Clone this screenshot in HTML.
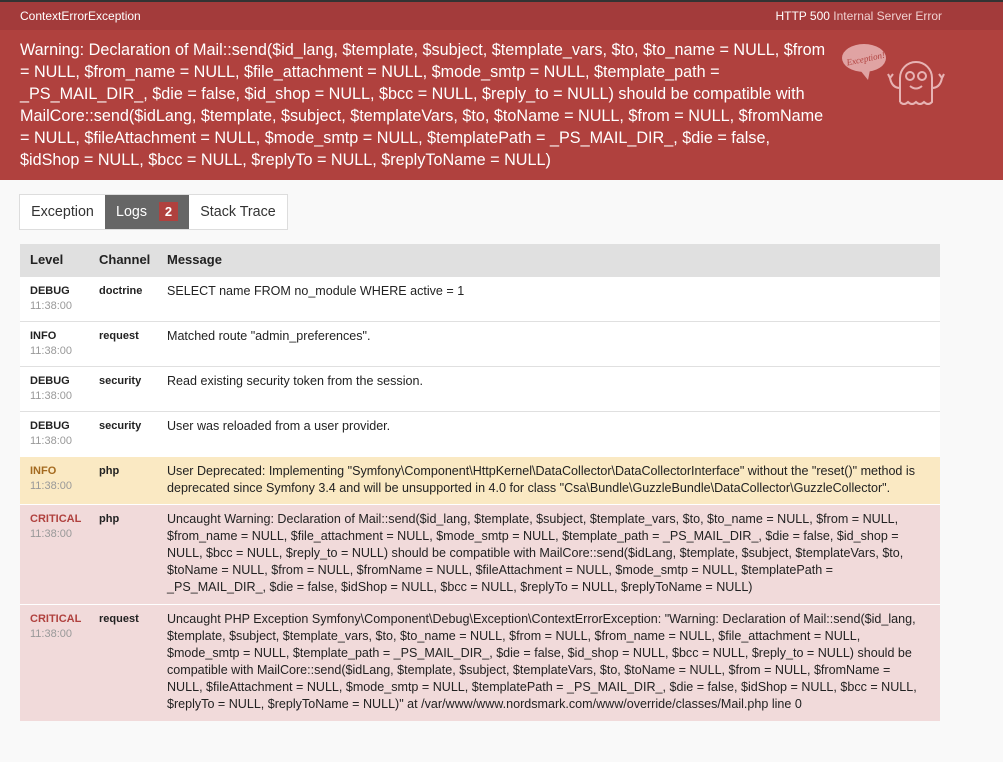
<!DOCTYPE html>
<html><head><meta charset="utf-8"><style>
*{margin:0;padding:0;box-sizing:border-box}
body{width:1003px;height:762px;background:#f9f9f9;font-family:"Liberation Sans",Arial,sans-serif;color:#222;overflow:hidden}
.top{height:30px;background:#a33b3b;border-top:2px solid #333;color:#fff;font-size:12px;display:flex;justify-content:space-between;align-items:center;padding:0 61px 0 20px}
.top span.r b{font-weight:normal;color:#f0d0d0}
.hdr{height:150px;background:#b0413e;color:#fff;font-size:16.2px;line-height:22px;padding:9px 20px 0 20px;position:relative;white-space:nowrap}
.ghost{position:absolute;left:838px;top:8px}
.tabs{position:absolute;left:19px;top:194px;display:flex;border:1px solid #ddd;background:#fff;height:36px}
.tabs div{line-height:34px;font-size:14.3px;color:#333;text-align:center}
.tabs .act{background:#666;color:#fff}
.badge{display:inline-block;background:#b0413e;color:#fff;font-weight:bold;font-size:13px;width:19px;line-height:19px;margin-left:8px;text-align:center}
table{position:absolute;left:20px;top:244px;width:920px;border-collapse:collapse;font-size:12.55px;table-layout:fixed}
th{background:#e0e0e0;text-align:left;font-size:13px;height:32px;padding:0;font-weight:bold}
th:first-child{padding-left:10px}
td{vertical-align:top;padding:7px 0 7px 0;line-height:17px;border-top:1px solid #e0e0e0;background:#fff;white-space:nowrap}
td.l{font-size:11px;font-weight:bold;line-height:15px;padding-left:10px;padding-top:7px}
td.l small{display:block;font-weight:normal;color:#999;font-size:11px}
td.c{font-size:11px;font-weight:bold;line-height:15px;padding-top:7px}
td.m{padding-top:6px}
tr.w td{background:#fae9c3}
tr.w td.l{color:#a46a1f}
tr.e td{background:#f1dada;padding-bottom:8px}
tr.e td.l{color:#b0413e}
tr.e td,tr.w td{border-top:1px solid #fff}
</style></head><body>
<div class="top"><span>ContextErrorException</span><span class="r">HTTP 500 <b>Internal Server Error</b></span></div>
<div class="hdr">Warning: Declaration of Mail::send($id_lang, $template, $subject, $template_vars, $to, $to_name = NULL, $from<br>= NULL, $from_name = NULL, $file_attachment = NULL, $mode_smtp = NULL, $template_path =<br>_PS_MAIL_DIR_, $die = false, $id_shop = NULL, $bcc = NULL, $reply_to = NULL) should be compatible with<br>MailCore::send($idLang, $template, $subject, $templateVars, $to, $toName = NULL, $from = NULL, $fromName<br>= NULL, $fileAttachment = NULL, $mode_smtp = NULL, $templatePath = _PS_MAIL_DIR_, $die = false,<br>$idShop = NULL, $bcc = NULL, $replyTo = NULL, $replyToName = NULL)
<svg class="ghost" width="110" height="75" viewBox="0 0 110 75">
<ellipse cx="26" cy="20" rx="22" ry="14" fill="#e0a3a3"/><path d="M22 32 L30 42 L32 32Z" fill="#e0a3a3"/>
<text x="8" y="24" font-size="9" font-style="italic" fill="#b0413e" font-family="Liberation Serif,serif" transform="rotate(-12 26 20)">Exception!</text>
<g fill="none" stroke="#e7b3b3" stroke-width="2"><path d="M62 64 V40 a16 16 0 0 1 32 0 V64 q-4 4 -8 0 q-4 4 -8 0 q-4 4 -8 0 q-4 4 -8 0"/>
<circle cx="72" cy="38" r="4"/><circle cx="84" cy="38" r="4"/><path d="M72 48 q6 5 12 0"/>
<path d="M62 50 q-8 0 -10 -10 M52 40 l-2 -4 M52 40 l3 -4"/><path d="M94 50 q8 0 10 -10 M104 40 l2 -4 M104 40 l-3 -4"/></g>
</svg></div>
<div class="tabs"><div style="width:85px">Exception</div><div class="act" style="width:84px">Logs <span class="badge">2</span></div><div style="width:98px">Stack Trace</div></div>
<table>
<colgroup><col style="width:79px"><col style="width:68px"><col></colgroup>
<tr><th>Level</th><th>Channel</th><th>Message</th></tr>
<tr><td class="l">DEBUG<small>11:38:00</small></td><td class="c">doctrine</td><td class="m">SELECT name FROM no_module WHERE active = 1</td></tr>
<tr><td class="l">INFO<small>11:38:00</small></td><td class="c">request</td><td class="m">Matched route "admin_preferences".</td></tr>
<tr><td class="l">DEBUG<small>11:38:00</small></td><td class="c">security</td><td class="m">Read existing security token from the session.</td></tr>
<tr><td class="l">DEBUG<small>11:38:00</small></td><td class="c">security</td><td class="m">User was reloaded from a user provider.</td></tr>
<tr class="w"><td class="l">INFO<small>11:38:00</small></td><td class="c">php</td><td class="m">User Deprecated: Implementing "Symfony\Component\HttpKernel\DataCollector\DataCollectorInterface" without the "reset()" method is<br>deprecated since Symfony 3.4 and will be unsupported in 4.0 for class "Csa\Bundle\GuzzleBundle\DataCollector\GuzzleCollector".</td></tr>
<tr class="e"><td class="l">CRITICAL<small>11:38:00</small></td><td class="c">php</td><td class="m">Uncaught Warning: Declaration of Mail::send($id_lang, $template, $subject, $template_vars, $to, $to_name = NULL, $from = NULL,<br>$from_name = NULL, $file_attachment = NULL, $mode_smtp = NULL, $template_path = _PS_MAIL_DIR_, $die = false, $id_shop =<br>NULL, $bcc = NULL, $reply_to = NULL) should be compatible with MailCore::send($idLang, $template, $subject, $templateVars, $to,<br>$toName = NULL, $from = NULL, $fromName = NULL, $fileAttachment = NULL, $mode_smtp = NULL, $templatePath =<br>_PS_MAIL_DIR_, $die = false, $idShop = NULL, $bcc = NULL, $replyTo = NULL, $replyToName = NULL)</td></tr>
<tr class="e"><td class="l">CRITICAL<small>11:38:00</small></td><td class="c">request</td><td class="m">Uncaught PHP Exception Symfony\Component\Debug\Exception\ContextErrorException: "Warning: Declaration of Mail::send($id_lang,<br>$template, $subject, $template_vars, $to, $to_name = NULL, $from = NULL, $from_name = NULL, $file_attachment = NULL,<br>$mode_smtp = NULL, $template_path = _PS_MAIL_DIR_, $die = false, $id_shop = NULL, $bcc = NULL, $reply_to = NULL) should be<br>compatible with MailCore::send($idLang, $template, $subject, $templateVars, $to, $toName = NULL, $from = NULL, $fromName =<br>NULL, $fileAttachment = NULL, $mode_smtp = NULL, $templatePath = _PS_MAIL_DIR_, $die = false, $idShop = NULL, $bcc = NULL,<br>$replyTo = NULL, $replyToName = NULL)" at /var/www/www.nordsmark.com/www/override/classes/Mail.php line 0</td></tr>
</table>
</body></html>
